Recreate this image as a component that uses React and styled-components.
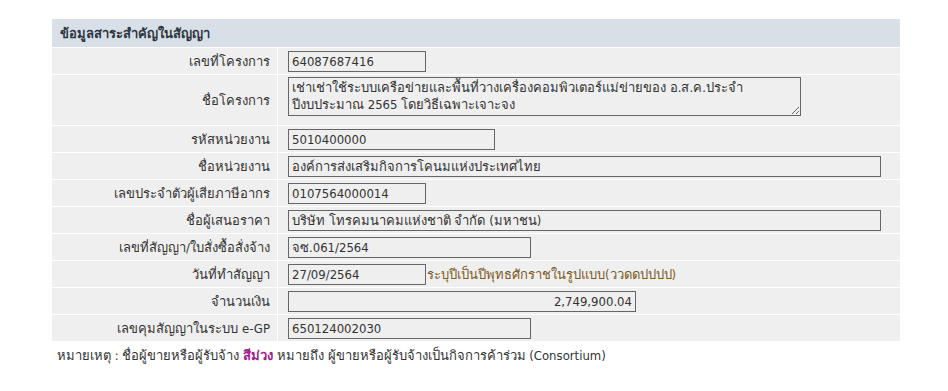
import React from "react";
import styled, { createGlobalStyle } from "styled-components";

const GlobalStyle = createGlobalStyle`
  body {
    margin: 0;
    background: #fff;
    font-family: Tahoma, "DejaVu Sans Condensed", "DejaVu Sans", sans-serif;
    font-size: 13px;
    color: #333;
  }
`;

const fields = [
  { label: "เลขที่โครงการ", value: "64087687416", width: 138 },
  {
    label: "ชื่อโครงการ",
    value:
      "เช่าเช่าใช้ระบบเครือข่ายและพื้นที่วางเครื่องคอมพิวเตอร์แม่ข่ายของ อ.ส.ค.ประจำ\nปีงบประมาณ 2565 โดยวิธีเฉพาะเจาะจง",
    width: 513,
    multiline: true,
  },
  { label: "รหัสหน่วยงาน", value: "5010400000", width: 207 },
  { label: "ชื่อหน่วยงาน", value: "องค์การส่งเสริมกิจการโคนมแห่งประเทศไทย", width: 593 },
  { label: "เลขประจำตัวผู้เสียภาษีอากร", value: "0107564000014", width: 138 },
  { label: "ชื่อผู้เสนอราคา", value: "บริษัท โทรคมนาคมแห่งชาติ จำกัด (มหาชน)", width: 593 },
  { label: "เลขที่สัญญา/ใบสั่งซื้อสั่งจ้าง", value: "จซ.061/2564", width: 243 },
  {
    label: "วันที่ทำสัญญา",
    value: "27/09/2564",
    width: 138,
    hint: "ระบุปีเป็นปีพุทธศักราชในรูปแบบ(ววดดปปปป)",
  },
  { label: "จำนวนเงิน", value: "2,749,900.04", width: 348, align: "right" },
  { label: "เลขคุมสัญญาในระบบ e-GP", value: "650124002030", width: 243 },
];

export default function App() {
  return (
    <Page>
      <GlobalStyle />
      <Table>
        <Heading>ข้อมูลสาระสำคัญในสัญญา</Heading>
        {fields.map((f) => (
          <React.Fragment key={f.label}>
            <Label>{f.label}</Label>
            <Value>
              {f.multiline ? (
                <Area $w={f.width} rows={2} value={f.value} readOnly />
              ) : (
                <Field $w={f.width} $align={f.align} value={f.value} readOnly />
              )}
              {f.hint && <Hint>{f.hint}</Hint>}
            </Value>
          </React.Fragment>
        ))}
      </Table>
      <Note>
        หมายเหตุ : ชื่อผู้ขายหรือผู้รับจ้าง <Purple>สีม่วง</Purple> หมายถึง
        ผู้ขายหรือผู้รับจ้างเป็นกิจการค้าร่วม (Consortium)
      </Note>
    </Page>
  );
}

const Page = styled.div`
  padding: 19px 0 0 52px;
`;

const Table = styled.div`
  display: grid;
  grid-template-columns: 225px 622px;
  gap: 1px;
  background: #fff;
  width: 848px;
`;

const Heading = styled.div`
  grid-column: 1 / -1;
  height: 28px;
  display: flex;
  align-items: center;
  padding-left: 8px;
  background: #d9dfe6;
  color: #2c3642;
  font-weight: bold;
`;

const Label = styled.div`
  background: #efefef;
  min-height: 26px;
  display: flex;
  align-items: center;
  justify-content: flex-end;
  padding-right: 7px;
`;

const Value = styled.div`
  background: #efefef;
  min-height: 26px;
  display: flex;
  align-items: center;
  padding: 0 0 0 10px;
`;

const Field = styled.input`
  box-sizing: border-box;
  width: ${(p) => p.$w}px;
  height: 21px;
  margin: 0;
  padding: 0 3px;
  border: 1px solid #666;
  border-radius: 0;
  background: #efefef;
  color: #333;
  font: inherit;
  text-align: ${(p) => p.$align || "left"};
  outline: none;
`;

const Area = styled.textarea`
  box-sizing: border-box;
  width: ${(p) => p.$w}px;
  height: 39px;
  margin: 2px 0 9px;
  padding: 1px 3px;
  border: 1px solid #666;
  border-radius: 0;
  background: #efefef;
  color: #333;
  font: inherit;
  line-height: 17px;
  overflow: hidden;
  outline: none;
`;

const Hint = styled.span`
  color: #7d5a1e;
  margin-left: 1px;
`;

const Note = styled.p`
  margin: 4px 0 0 5px;
  color: #333;
`;

const Purple = styled.b`
  color: #a0208c;
`;
